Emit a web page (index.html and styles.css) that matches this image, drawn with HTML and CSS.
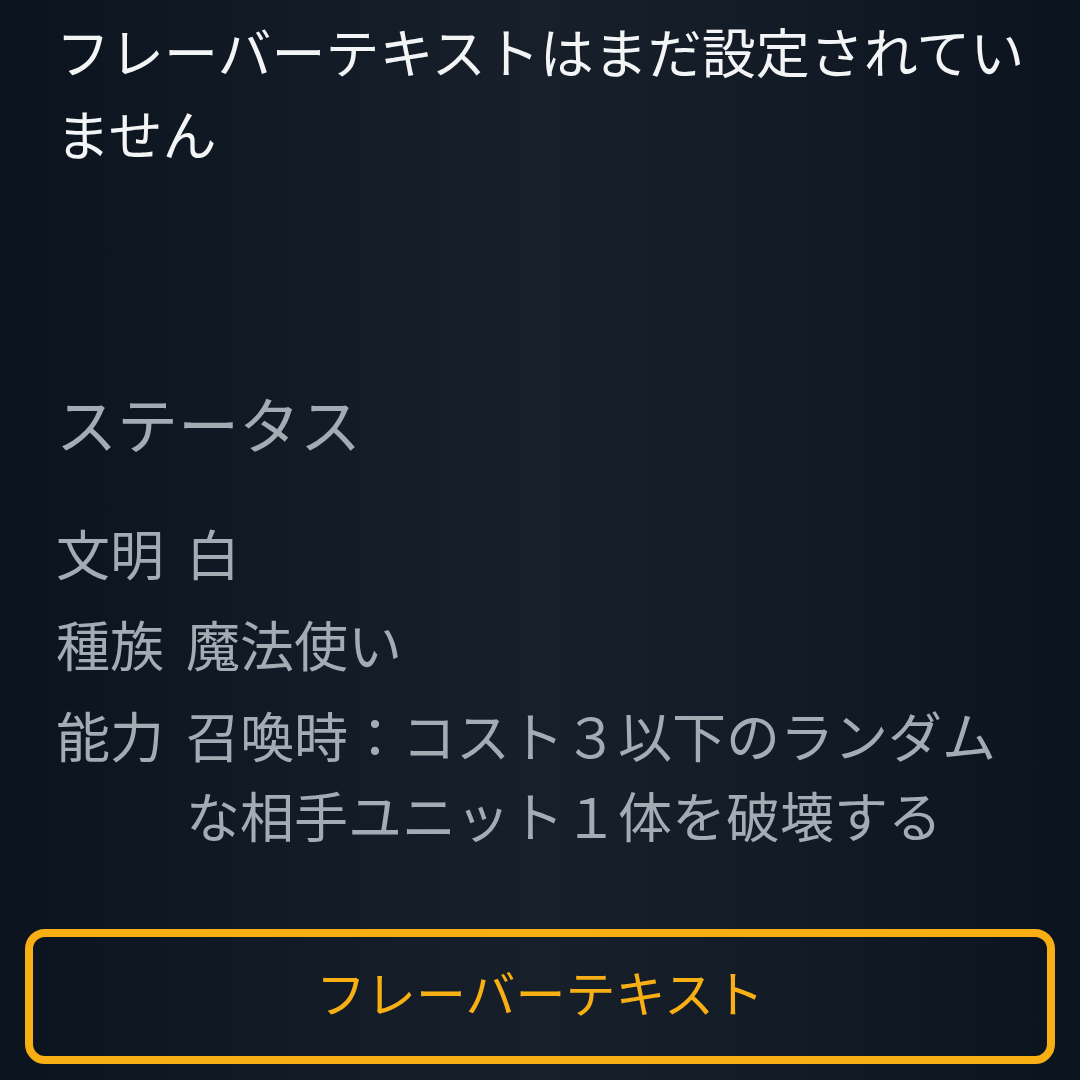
FILE: index.html
```html
<!DOCTYPE html>
<html lang="ja">
<head>
<meta charset="utf-8">
<title>フレーバーテキスト</title>
<link rel="stylesheet" href="styles.css">
</head>
<body>
<main class="page">
  <p class="flavor">フレーバーテキストはまだ設定されていません</p>
  <section class="status">
    <h2 class="status-title">ステータス</h2>
    <dl class="stats">
      <div class="stat-row"><dt>文明</dt><dd>白</dd></div>
      <div class="stat-row"><dt>種族</dt><dd>魔法使い</dd></div>
      <div class="stat-row"><dt>能力</dt><dd>召喚時：コスト３以下のランダムな相手ユニット１体を破壊する</dd></div>
    </dl>
  </section>
  <button class="flavor-btn" type="button">フレーバーテキスト</button>
</main>
</body>
</html>
```

FILE: styles.css
```css
html, body {
  margin: 0;
  padding: 0;
}
body {
  width: 1080px;
  height: 1080px;
  overflow: hidden;
  background: linear-gradient(90deg, #0b141e 0%, #131c26 30%, #17202a 50%, #131c26 72%, #0b141e 100%);
  font-family: "Noto Sans CJK JP", "Noto Sans", sans-serif;
}
.page {
  display: flex;
  flex-direction: column;
  height: 1080px;
  box-sizing: border-box;
  padding-top: 10px;
}
.flavor {
  margin: 0;
  padding: 0 50px 0 56px;
  font-size: 54px;
  line-height: 82px;
  color: #f2f4f6;
}
.status {
  margin-top: 209px;
  padding: 0 50px 0 56px;
}
.status-title {
  margin: 0;
  font-size: 61px;
  line-height: 80px;
  font-weight: 400;
  color: #a3abb3;
}
.stats {
  margin: 50px 0 0;
  display: flex;
  flex-direction: column;
  gap: 11px;
}
.stat-row {
  display: grid;
  grid-template-columns: auto 1fr;
  column-gap: 22px;
  font-size: 54px;
  line-height: 80px;
  color: #a3abb3;
}
.stat-row dt, .stat-row dd {
  margin: 0;
}
.flavor-btn {
  margin: 74px 25px 0;
  height: 135px;
  box-sizing: border-box;
  border: 8px solid #f7af14;
  border-radius: 20px;
  background: transparent;
  color: #f7af14;
  font-family: "Noto Sans CJK JP", "Noto Sans", sans-serif;
  font-size: 50px;
  line-height: 60px;
  padding: 0 0 11px;
  display: flex;
  align-items: center;
  justify-content: center;
}
```
